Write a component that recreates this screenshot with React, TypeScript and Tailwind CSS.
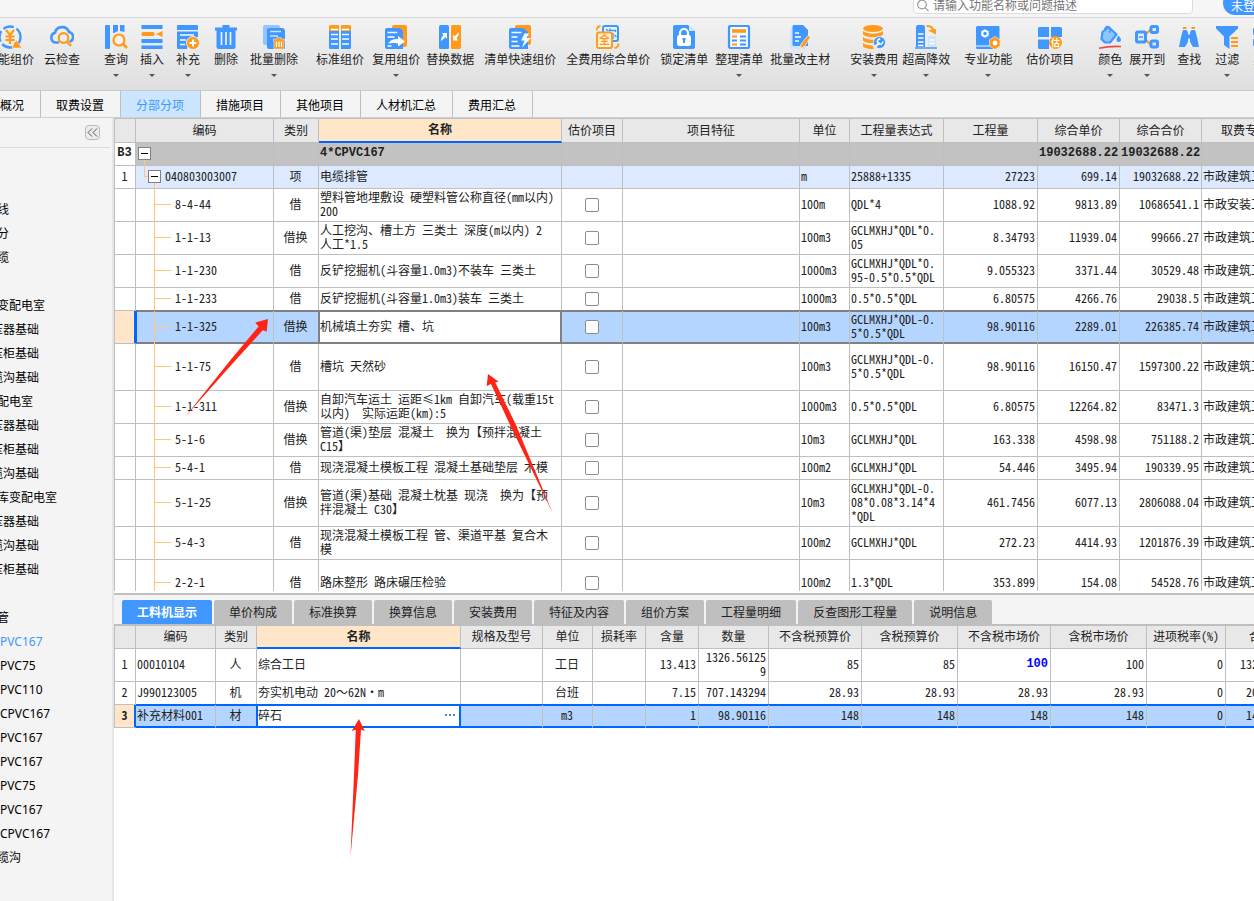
import { useState } from "react";
import type { ReactNode } from "react";
import clsx from "clsx";

const BLUE = "#3f97ff";
const ORANGE = "#ff9a1a";
const LIGHT = "#90c6ff";

/* ---------- toolbar icons ---------- */

const Icon = ({ children }: { children: ReactNode }) => (
  <svg viewBox="0 0 24 24" className="h-6 w-6 shrink-0" fill="none" aria-hidden="true">
    {children}
  </svg>
);

const icons: Record<string, ReactNode> = {
  smart: (
    <Icon>
      <circle cx="12" cy="12" r="10.5" stroke={BLUE} strokeWidth="2.4" strokeDasharray="11 3" />
      <path d="M8 5l4 5 4-5M12 10v9M7.500 11.500h9M7.500 15h9" stroke={ORANGE} strokeWidth="2.200" />
      <path d="M14 23l1.500-4L18.500 15l2.500 4L24 23z" fill={ORANGE} stroke="#eee" strokeWidth=".6" />
    </Icon>
  ),
  cloud: (
    <Icon>
      <path d="M8 19.500H6a5 5 0 0 1-1-9.800A7.300 7.300 0 0 1 19 9a5 5 0 0 1 1.500 9.300" stroke={BLUE} strokeWidth="2.600" strokeLinecap="round" transform="translate(0 -2)" />
      <circle cx="13.500" cy="13" r="4.800" stroke={ORANGE} strokeWidth="2.200" />
      <path d="M17 16.500l4 4.500" stroke={ORANGE} strokeWidth="2.600" />
    </Icon>
  ),
  search: (
    <Icon>
      <rect x="1" y="0" width="5" height="24" rx="1" fill={BLUE} />
      <path d="M9 0h5v6l-4 2H9zM16 0h4.500v7L16 6z" fill={BLUE} />
      <circle cx="15" cy="15" r="5.500" fill="#f2f2f2" stroke={ORANGE} strokeWidth="2.200" />
      <path d="M19 19l4 4" stroke={ORANGE} strokeWidth="2.600" />
    </Icon>
  ),
  insert: (
    <Icon>
      <path d="M1.500 0h21v4h-21zM1.500 14h21v4h-21zM1.500 20.500h21v3.500h-21z" fill={BLUE} />
      <rect x="1.500" y="7" width="13" height="4" rx="1.500" fill={ORANGE} />
      <path d="M22.500 6v6l-6.500-3z" fill={ORANGE} />
    </Icon>
  ),
  append: (
    <Icon>
      <path d="M2 0h19a1 1 0 0 1 1 1v4H1V1a1 1 0 0 1 1-1zM1 6.500h21V12l-9 3-2 9H2a1 1 0 0 1-1-1z" fill={BLUE} />
      <path d="M4 10h14M4 15h6M4 19.500h5" stroke="#fff" strokeWidth="1.600" />
      <circle cx="17" cy="18" r="6.500" fill={ORANGE} stroke="#eee" />
      <path d="M17 14.500v7M13.500 18h7" stroke="#fff" strokeWidth="2" />
    </Icon>
  ),
  remove: (
    <Icon>
      <path d="M1 2.500h7.500V0h7v2.500H23v3h-1.500V22a2 2 0 0 1-2 2h-15a2 2 0 0 1-2-2V5.500H1z" fill={BLUE} />
      <path d="M7.500 7v13M12 7v13M16.500 7v13" stroke="#eaf3ff" strokeWidth="1.700" />
    </Icon>
  ),
  batchRemove: (
    <Icon>
      <rect x="1" y="0" width="17" height="20" rx="2" fill={LIGHT} />
      <path d="M7 3h14l2 2v19H7a2 2 0 0 1-2-2V5a2 2 0 0 1 2-2z" fill={BLUE} />
      <path d="M8 6.500h11M8 11h8" stroke="#cfe5ff" strokeWidth="1.500" />
      <path d="M11.500 14h3.500v-1.500h4V14h3.500v2H22v8H12v-8h-.500z" fill={ORANGE} stroke="#e8e8e8" strokeWidth=".6" />
      <path d="M14.500 16.500V22M17 16.500V22M19.500 16.500V22" stroke="#fff" strokeWidth="1.200" />
    </Icon>
  ),
  standard: (
    <Icon>
      <path d="M1 6V1.500A1.500 1.500 0 0 1 2.500 0H10a1 1 0 0 1 1 1v5zM13 6V1a1 1 0 0 1 1-1h7.500A1.500 1.500 0 0 1 23 1.500V6z" fill={ORANGE} />
      <path d="M1 6h10v18H2.500A1.500 1.500 0 0 1 1 22.500zM13 6h10v16.500a1.500 1.500 0 0 1-1.500 1.500H13z" fill={BLUE} />
      <path d="M3 4.500h7M14 4.500h7M3 9.500h7M14 9.500h7M3 14h7M14 14h7M3 19h7M14 19h7" stroke="#fff" strokeWidth="1.500" />
    </Icon>
  ),
  reuse: (
    <Icon>
      <rect x="8" y="0" width="15" height="22" rx="2" fill={ORANGE} />
      <path d="M3 3h13l3 3v18H3a2 2 0 0 1-2-2V5a2 2 0 0 1 2-2z" fill={BLUE} />
      <path d="M3.500 7.500h10M3.500 12h7M3.500 21h4" stroke="#fff" strokeWidth="1.600" />
      <path d="M4 18.500c3-4 6-4.500 10-4.500v-3l7 5.500-7 5v-3c-4-.8-7-.5-10 0z" fill="#fff" />
    </Icon>
  ),
  replace: (
    <Icon>
      <rect x="1" y="0" width="10" height="24" rx="1.500" fill={BLUE} />
      <rect x="13" y="0" width="10" height="24" rx="1.500" fill={ORANGE} />
      <path d="M3 16c0-3 1-4.500 2.500-6L4 8h5v6l-1.500-2C6 13.500 5 14.500 3 16zM21 7c0 3-1 4.500-2.500 6l1.500 2.500h-5V9.500l1.500 2C18 10 19 9 21 7z" fill="#fff" />
    </Icon>
  ),
  fast: (
    <Icon>
      <rect x="7" y="0" width="16" height="20" rx="2" fill={ORANGE} />
      <path d="M3 3h12l5 4v17H3a2 2 0 0 1-2-2V5a2 2 0 0 1 2-2z" fill={BLUE} />
      <path d="M3.500 7.500h10M3.500 12h6M3.500 16.500h6M3.500 21h8" stroke="#fff" strokeWidth="1.500" />
      <path d="M16.500 8.500h4.500L18.500 13H23l-9 9.500 2.500-7H13z" fill="#fff" />
    </Icon>
  ),
  full: (
    <Icon>
      <rect x="7" y="1" width="15" height="15" rx="2" fill="#eaf3ff" stroke={BLUE} strokeWidth="2" />
      <path d="M10 4l2 2M14 3.500v1.500M12.500 5.500h7v1.500M17 8v6M18.500 10l2 2" stroke={BLUE} strokeWidth="1.400" />
      <rect x="1" y="7.500" width="15" height="15.500" rx="2" fill="#fff2e0" stroke={ORANGE} strokeWidth="2" />
      <text x="3" y="19" fontSize="11" fontWeight="700" fill={ORANGE}>全</text>
      <path d="M.500 5.500c0-2.500 1.500-4 4-4.500M22.500 18.500c0 2.500-1.500 4-4 4.500" stroke={ORANGE} strokeWidth="1.800" />
    </Icon>
  ),
  lock: (
    <Icon>
      <path d="M3 0h13l7 6v16a2 2 0 0 1-2 2H3a2 2 0 0 1-2-2V2a2 2 0 0 1 2-2z" fill={BLUE} />
      <path d="M17 0l6 6h-6z" fill="#cfe5ff" />
      <rect x="5" y="10" width="14" height="11" rx="2.500" fill="#fff" />
      <path d="M8 10.500V8a4 4 0 0 1 8 0v2.500" stroke="#fff" strokeWidth="2.200" />
      <path d="M12 13v5M10.500 14h3" stroke={BLUE} strokeWidth="2" />
    </Icon>
  ),
  arrange: (
    <Icon>
      <rect x="2" y="1" width="20" height="22" rx="1.500" fill="#f6f9ff" stroke={BLUE} strokeWidth="2.200" />
      <path d="M5 6h14" stroke={ORANGE} strokeWidth="3.600" />
      <path d="M5 11.500h5M5 19.500h5" stroke={ORANGE} strokeWidth="1.800" />
      <path d="M13 11.500h6M5 15.500h5M13 15.500h6M13 19.500h6" stroke={BLUE} strokeWidth="1.800" />
    </Icon>
  ),
  batchEdit: (
    <Icon>
      <path d="M3 3h3v18h12v1a2 2 0 0 1-2 2H4a2 2 0 0 1-2-2V4z" fill="#cfe5ff" />
      <path d="M6 0h9l5 5v16H6a1.500 1.500 0 0 1-1.500-1.500v-18A1.500 1.500 0 0 1 6 0z" fill={BLUE} />
      <path d="M7 8h4M7 12h6M7 16h4" stroke="#fff" strokeWidth="1.500" />
      <path d="M20 10.500l2.500 1.500-6 9.500-4 2 .500-4.500z" fill={ORANGE} stroke="#eee" strokeWidth=".8" />
    </Icon>
  ),
  install: (
    <Icon>
      <ellipse cx="11" cy="3.500" rx="10" ry="3.500" fill={ORANGE} />
      <path d="M1 6c4 3.500 16 3.500 20 0v3.500C17 13 5 13 1 9.500zM1 12c3 2.600 8 3 12 2.400L11 18c-4 .2-8-.5-10-2.500zM1 18c2.500 1.800 6 2.500 9.500 2.500L12 24C8 24 3 23.500 1 21.500z" fill={ORANGE} />
      <circle cx="17.500" cy="17.500" r="6" fill={BLUE} stroke="#f0f0f0" strokeWidth=".8" />
      <path d="M13.500 21.500l4-4" stroke="#fff" strokeWidth="2.200" />
      <path d="M20.800 16.500a2.700 2.700 0 1 1-2.600-2.600" stroke="#fff" strokeWidth="1.600" />
    </Icon>
  ),
  tower: (
    <Icon>
      <path d="M2 2a2 2 0 0 1 2-2h5a2 2 0 0 1 2 2v20H2z" fill={BLUE} />
      <path d="M4 9h5.500M4 13h5.500M4 17h5.500M4 20.500h5.500" stroke="#fff" strokeWidth="1.500" />
      <rect x="14" y="11" width="8" height="11" rx="1" fill="#cfe5ff" />
      <path d="M15.500 15h5M15.500 18.500h5" stroke="#fff" strokeWidth="1.300" />
      <path d="M1 23h22" stroke={BLUE} strokeWidth="1.500" />
      <path d="M12.500 1c4 0 6.500 1.500 6.500 5" stroke={ORANGE} strokeWidth="2.200" />
      <path d="M14 5.500l8-1.500v5.500z" fill={ORANGE} />
    </Icon>
  ),
  pro: (
    <Icon>
      <path d="M1.500 1h21a1.500 1.500 0 0 1 1 1.500V14L17 24H1.500A1.500 1.500 0 0 1 0 22.500v-20A1.500 1.500 0 0 1 1.500 1z" fill={BLUE} />
      <path d="M9 4.300l3.700 2v4.400L9 12.800l-3.700-2.100V6.300z" fill="#fff" />
      <circle cx="9" cy="8.500" r="1.700" fill={BLUE} />
      <path d="M0 21h15" stroke="#d9eaff" strokeWidth="1.200" />
      <path d="M19 11.500l5 3.300v6.400l-5 3.300-5.500-3.300v-6.400z" fill={ORANGE} stroke="#eee" strokeWidth=".6" />
      <circle cx="19" cy="18" r="2.400" fill="#fff" />
    </Icon>
  ),
  estimate: (
    <Icon>
      <path d="M0 3.500A1.500 1.500 0 0 1 1.500 2H11v10H0zM13 2h9.500A1.500 1.500 0 0 1 24 3.500V12H13zM0 14.500h11V24H1.500A1.500 1.500 0 0 1 0 22.500z" fill={BLUE} />
      <circle cx="17.500" cy="17.500" r="6.500" fill={ORANGE} />
      <text x="13" y="21" fontSize="9" fontWeight="700" fill="#fff">估</text>
    </Icon>
  ),
  color: (
    <Icon>
      <path d="M10.500 2l8 7.500-6.500 8H7L3.500 14 4.500 7z" fill={LIGHT} stroke={BLUE} strokeWidth="2.200" strokeLinejoin="round" />
      <path d="M6.500 4.500C8 .500 11 .500 12 4v4" stroke={BLUE} strokeWidth="1.500" />
      <path d="M20.500 10.500c1.500 2 2.500 3.200 2.500 4.300a2.300 2.300 0 0 1-4.600 0c0-1.100 1-2.300 2.100-4.300z" fill={BLUE} />
      <path d="M1 23.200c7-1.500 14-2 22-1.700" stroke="#f0464b" strokeWidth="1.600" />
    </Icon>
  ),
  expand: (
    <Icon>
      <path d="M10 10l6-6M10 14l6 6" stroke={ORANGE} strokeWidth="1.800" />
      <rect x="1.500" y="7" width="9" height="10" rx="1.500" fill="#dcebff" stroke={BLUE} strokeWidth="3" />
      <path d="M4 12h4" stroke={BLUE} strokeWidth="1.500" />
      <rect x="16" y="1.500" width="6.500" height="6" rx="1.500" fill="#dcebff" stroke={BLUE} strokeWidth="3" />
      <rect x="16" y="16" width="6.500" height="6" rx="1.500" fill="#dcebff" stroke={BLUE} strokeWidth="3" />
    </Icon>
  ),
  find: (
    <Icon>
      <path d="M6 2h3.500v2H6zM14.500 2H18v2h-3.500z" fill={ORANGE} />
      <path d="M6 5h3.500l1.500 2.500V17l-3 5H2l2-10zM18 5h-3.500L13 7.500V17l3 5h6l-2-10z" fill={BLUE} />
      <path d="M10 9.500h4v4h-4z" fill={BLUE} />
    </Icon>
  ),
  filter: (
    <Icon>
      <path d="M1 1h22v2.500l-8.500 8V24L9 20v-8.500L1 3.500z" fill={BLUE} />
      <path d="M16 13h7M16 17h7M16 21h7" stroke={ORANGE} strokeWidth="2" />
    </Icon>
  ),
  other: (
    <Icon>
      <rect x="0" y="2" width="10" height="9" rx="3" fill={BLUE} />
      <rect x="13" y="2" width="10" height="9" rx="3" fill={ORANGE} />
      <rect x="0" y="13" width="10" height="9" rx="3" fill={BLUE} />
      <rect x="13" y="13" width="10" height="9" rx="3" fill={BLUE} />
    </Icon>
  ),
};

type Tool = { label: string; icon: string; menu?: boolean };

const toolGroups: { className: string; tools: Tool[] }[] = [
  {
    className: "-ml-3.5 gap-2.5",
    tools: [
      { label: "智能组价", icon: "smart" },
      { label: "云检查", icon: "cloud" },
    ],
  },
  {
    className: "ml-6 gap-3",
    tools: [
      { label: "查询", icon: "search", menu: true },
      { label: "插入", icon: "insert", menu: true },
      { label: "补充", icon: "append", menu: true },
    ],
  },
  {
    className: "ml-3.5 gap-3",
    tools: [
      { label: "删除", icon: "remove" },
      { label: "批量删除", icon: "batchRemove", menu: true },
    ],
  },
  {
    className: "ml-[18px] gap-2",
    tools: [
      { label: "标准组价", icon: "standard" },
      { label: "复用组价", icon: "reuse", menu: true },
    ],
  },
  {
    className: "ml-1.5 gap-2.5",
    tools: [
      { label: "替换数据", icon: "replace" },
      { label: "清单快速组价", icon: "fast" },
      { label: "全费用综合单价", icon: "full" },
    ],
  },
  {
    className: "ml-2.5 gap-[7px]",
    tools: [
      { label: "锁定清单", icon: "lock" },
      { label: "整理清单", icon: "arrange", menu: true },
      { label: "批量改主材", icon: "batchEdit" },
    ],
  },
  {
    className: "ml-5 gap-1",
    tools: [
      { label: "安装费用", icon: "install", menu: true },
      { label: "超高降效", icon: "tower", menu: true },
    ],
  },
  {
    className: "ml-3.5 gap-3.5",
    tools: [
      { label: "专业功能", icon: "pro", menu: true },
      { label: "估价项目", icon: "estimate" },
    ],
  },
  {
    className: "ml-6 gap-[7px]",
    tools: [
      { label: "颜色", icon: "color", menu: true },
      { label: "展开到", icon: "expand", menu: true },
    ],
  },
  {
    className: "ml-3 gap-3.5",
    tools: [
      { label: "查找", icon: "find" },
      { label: "过滤", icon: "filter", menu: true },
      { label: "其他", icon: "other" },
    ],
  },
];

function Header() {
  return (
    <header className="flex h-[18px] shrink-0 items-end justify-end overflow-hidden border-b border-[#d8d8d8] bg-[#f6f6f6]">
      <div className="mb-[3px] flex h-6 w-[280px] shrink-0 items-end rounded border border-[#dcdcdc] bg-white pl-0.5">
        <svg viewBox="0 0 14 14" className="h-3.5 w-3.5" fill="none" stroke="#999" strokeWidth="1.200" aria-hidden="true">
          <circle cx="6" cy="5.500" r="4.300" />
          <path d="M9.200 8.700l3.300 3.500" />
        </svg>
        <input
          aria-label="搜索"
          placeholder="请输入功能名称或问题描述"
          className="ml-[3px] h-3.5 w-60 text-xs leading-[14px] outline-none placeholder:text-[#777]"
        />
      </div>
      <button className="-mr-8 mb-0.5 ml-[30px] flex h-6 shrink-0 items-end rounded-full bg-[#3f97ff] pl-2 pr-[19px] text-xs leading-4 text-white">
        未登录
      </button>
    </header>
  );
}

function Toolbar() {
  return (
    <div className="flex h-[73px] shrink-0 overflow-hidden border-b border-[#c8c8c8] bg-linear-to-b from-[#f2f2f2] to-[#dfdfdf]">
      {toolGroups.map((group, i) => (
        <div key={i} className={clsx("flex shrink-0", group.className)}>
          {group.tools.map((t) => (
            <button key={t.label} className="flex flex-col items-center pt-[7px] text-xs leading-4 text-[#222]">
              {icons[t.icon]}
              <span className="mt-[3px] whitespace-nowrap">{t.label}</span>
              {t.menu && <span className="mt-1.5 border-x-[3px] border-t-[3px] border-x-transparent border-t-[#555]" />}
            </button>
          ))}
        </div>
      ))}
    </div>
  );
}

const mainTabs = ["工程概况", "取费设置", "分部分项", "措施项目", "其他项目", "人材机汇总", "费用汇总"];

function MainTabs() {
  const [current, setCurrent] = useState("分部分项");
  return (
    <nav className="flex h-[27px] shrink-0 overflow-hidden border-b border-[#d0d0d0] bg-[#f4f4f4]">
      <div className="-ml-[39px] flex">
        {mainTabs.map((t) => (
          <button
            key={t}
            onClick={() => setCurrent(t)}
            className={clsx(
              "shrink-0 whitespace-nowrap border-r border-[#bfbfbf] pl-[15px] pr-4 pt-[3px] text-xs",
              t === current ? "bg-[#cce6ff] text-[#3f97ff]" : "text-black"
            )}
          >
            {t}
          </button>
        ))}
      </div>
    </nav>
  );
}

/* ---------- sidebar ---------- */

const treeItems: { text: string; deep?: boolean }[] = [
  { text: "线" },
  { text: "分" },
  { text: "缆" },
  { text: "" },
  { text: "变配电室" },
  { text: "压器基础", deep: true },
  { text: "压柜基础", deep: true },
  { text: "缆沟基础", deep: true },
  { text: "配电室" },
  { text: "压器基础", deep: true },
  { text: "压柜基础", deep: true },
  { text: "缆沟基础", deep: true },
  { text: "库变配电室" },
  { text: "压器基础", deep: true },
  { text: "缆沟基础", deep: true },
  { text: "压柜基础", deep: true },
  { text: "" },
  { text: "管" },
  { text: "PVC167" },
  { text: "PVC75" },
  { text: "PVC110" },
  { text: "CPVC167" },
  { text: "PVC167" },
  { text: "PVC167" },
  { text: "PVC75" },
  { text: "PVC167" },
  { text: "CPVC167" },
  { text: "缆沟" },
];

function Sidebar() {
  const [picked, setPicked] = useState(18);
  return (
    <aside className="w-[114px] shrink-0 overflow-hidden border-r-2 border-[#e6e6e6] bg-[#f4f4f4]">
      <div className="mr-0.5 flex h-[30px] items-center justify-end border-b border-[#dcdcdc] pr-[10px]">
        <button
          aria-label="收起"
          className="flex h-[15px] w-[15px] items-center justify-center rounded-sm border border-[#bbb] bg-[#ececec]"
        >
          <svg viewBox="0 0 11 9" className="h-[9px] w-[11px]" fill="none" stroke="#555" aria-hidden="true">
            <path d="M5 .500l-4 4 4 4M10 .500l-4 4 4 4" />
          </svg>
        </button>
      </div>
      <ul className="pt-[50px]">
        {treeItems.map((item, i) => (
          <li key={i} className={clsx("h-6", item.deep ? "-ml-[9px]" : /^[CP]/.test(item.text) ? "ml-0" : "-ml-[3px]")}>
            {item.text && (
              <button
                onClick={() => setPicked(i)}
                className={clsx(
                  "block whitespace-nowrap font-['Noto_Sans','Noto_Sans_CJK_SC',sans-serif] text-xs leading-6",
                  i === picked ? "text-[#3f97ff]" : "text-black"
                )}
              >
                {item.text}
              </button>
            )}
          </li>
        ))}
      </ul>
    </aside>
  );
}

/* ---------- grids ---------- */

const th = "whitespace-nowrap border-b border-r border-[#bfbfbf] bg-[#e8e8e8] px-0 pb-0.5 pt-0 text-center font-normal";
const thActive = "border-b-2 border-r border-b-[#0066ff] border-r-[#bfbfbf] bg-[#ffe6c8] px-0 pb-0.5 pt-0 text-center font-bold";
const td = "relative whitespace-pre border-b border-r border-[#bfbfbf] pb-0.5 pl-px pr-0.5 pt-0";
const tdCheck = "relative border-b border-r border-[#bfbfbf] p-0";

type Item = {
  code: string;
  kind: string;
  name: string;
  unit: string;
  expr: string;
  qty: string;
  price: string;
  total: string;
  spec: string;
  height: string;
};

const h1 = "h-[23px]";
const h2 = "h-[33px]";
const h3 = "h-[47px]";

const items: Item[] = [
  { code: "8-4-44", kind: "借", name: "塑料管地埋敷设 硬塑料管公称直径(mm以内)\n200", unit: "100m", expr: "QDL*4", qty: "1088.92", price: "9813.89", total: "10686541.1", spec: "市政安装工程", height: h2 },
  { code: "1-1-13", kind: "借换", name: "人工挖沟、槽土方 三类土 深度(m以内) 2\n人工*1.5", unit: "100m3", expr: "GCLMXHJ*QDL*0.\n05", qty: "8.34793", price: "11939.04", total: "99666.27", spec: "市政建筑工程", height: h2 },
  { code: "1-1-230", kind: "借", name: "反铲挖掘机(斗容量1.0m3)不装车 三类土", unit: "1000m3", expr: "GCLMXHJ*QDL*0.\n95-0.5*0.5*QDL", qty: "9.055323", price: "3371.44", total: "30529.48", spec: "市政建筑工程", height: h2 },
  { code: "1-1-233", kind: "借", name: "反铲挖掘机(斗容量1.0m3)装车 三类土", unit: "1000m3", expr: "0.5*0.5*QDL", qty: "6.80575", price: "4266.76", total: "29038.5", spec: "市政建筑工程", height: h1 },
  { code: "1-1-325", kind: "借换", name: "机械填土夯实 槽、坑", unit: "100m3", expr: "GCLMXHJ*QDL-0.\n5*0.5*QDL", qty: "98.90116", price: "2289.01", total: "226385.74", spec: "市政建筑工程", height: h2 },
  { code: "1-1-75", kind: "借", name: "槽坑 天然砂", unit: "100m3", expr: "GCLMXHJ*QDL-0.\n5*0.5*QDL", qty: "98.90116", price: "16150.47", total: "1597300.22", spec: "市政建筑工程", height: h3 },
  { code: "1-1-311", kind: "借换", name: "自卸汽车运土 运距≤1km 自卸汽车(载重15t\n以内)  实际运距(km):5", unit: "1000m3", expr: "0.5*0.5*QDL", qty: "6.80575", price: "12264.82", total: "83471.3", spec: "市政建筑工程", height: h2 },
  { code: "5-1-6", kind: "借换", name: "管道(渠)垫层 混凝土  换为【预拌混凝土\nC15】", unit: "10m3", expr: "GCLMXHJ*QDL", qty: "163.338", price: "4598.98", total: "751188.2", spec: "市政建筑工程", height: h2 },
  { code: "5-4-1", kind: "借", name: "现浇混凝土模板工程 混凝土基础垫层 木模", unit: "100m2", expr: "GCLMXHJ*QDL", qty: "54.446", price: "3495.94", total: "190339.95", spec: "市政建筑工程", height: h1 },
  { code: "5-1-25", kind: "借换", name: "管道(渠)基础 混凝土枕基 现浇  换为【预\n拌混凝土 C30】", unit: "10m3", expr: "GCLMXHJ*QDL-0.\n08*0.08*3.14*4\n*QDL", qty: "461.7456", price: "6077.13", total: "2806088.04", spec: "市政建筑工程", height: h3 },
  { code: "5-4-3", kind: "借", name: "现浇混凝土模板工程 管、渠道平基 复合木\n模", unit: "100m2", expr: "GCLMXHJ*QDL", qty: "272.23", price: "4414.93", total: "1201876.39", spec: "市政建筑工程", height: h2 },
  { code: "2-2-1", kind: "借", name: "路床整形 路床碾压检验", unit: "100m2", expr: "1.3*QDL", qty: "353.899", price: "154.08", total: "54528.76", spec: "市政建筑工程", height: h3 },
];

const Toggle = ({ className }: { className?: string }) => (
  <button
    aria-label="折叠"
    className={clsx("relative z-10 flex h-[13px] w-[13px] items-center justify-center border border-[#808080] bg-white", className)}
  >
    <span className="h-px w-[7px] bg-black" />
  </button>
);

const selectedTd = "border-b-[#808080] bg-[#b3d5ff] shadow-[0_-1px_#808080,inset_0_1px_#808080,inset_0_-1px_#808080]";

function ItemTable() {
  const [selected, setSelected] = useState("1-1-325");
  return (
    <table className="w-full min-w-[1175px] table-fixed border-separate border-spacing-0 border-l border-t border-[#bfbfbf] leading-[14px]">
      <colgroup>
        <col className="w-[21px]" />
        <col className="w-[138px]" />
        <col className="w-[45px]" />
        <col className="w-[243px]" />
        <col className="w-[61px]" />
        <col />
        <col className="w-[50px]" />
        <col className="w-[94px]" />
        <col className="w-[94px]" />
        <col className="w-[82px]" />
        <col className="w-[82px]" />
        <col className="w-[87px]" />
      </colgroup>
      <thead>
        <tr className="h-6">
          <th className={th} aria-label="序号" />
          <th className={th}>编码</th>
          <th className={th}>类别</th>
          <th className={thActive}>名称</th>
          <th className={th}>估价项目</th>
          <th className={th}>项目特征</th>
          <th className={th}>单位</th>
          <th className={th}>工程量表达式</th>
          <th className={th}>工程量</th>
          <th className={th}>综合单价</th>
          <th className={th}>综合合价</th>
          <th className={th}>取费专业</th>
        </tr>
      </thead>
      <tbody>
        <tr className="h-[23px] bg-[#c2c2c2] font-['Liberation_Mono',monospace] font-bold">
          <td className={clsx(td, "bg-white text-center")}>B3</td>
          <td className={td}>
            <Toggle className="ml-px" />
            <span className="absolute -bottom-px left-2 h-1.5 w-px bg-[#ffc67a]" />
          </td>
          <td className={td} />
          <td className={td}>4*CPVC167</td>
          <td className={td} />
          <td className={td} />
          <td className={td} />
          <td className={td} />
          <td className={td} />
          <td className={clsx(td, "text-right")}>19032688.22</td>
          <td className={clsx(td, "text-right")}>19032688.22</td>
          <td className={td} />
        </tr>
        <tr className="h-[23px] bg-[#dce9ff]">
          <td className={clsx(td, "bg-white text-center")}>1</td>
          <td className={td}>
            <span className="absolute left-2 top-0 h-[11px] w-1 border-b border-l border-[#ffc67a]" />
            <span className="absolute -bottom-px left-[18px] h-1.5 w-px bg-[#ffc67a]" />
            <span className="flex items-center gap-1 pl-[11px]">
              <Toggle className="shrink-0" />
              040803003007
            </span>
          </td>
          <td className={clsx(td, "text-center")}>项</td>
          <td className={td}>电缆排管</td>
          <td className={td} />
          <td className={td} />
          <td className={td}>m</td>
          <td className={td}>25888+1335</td>
          <td className={clsx(td, "text-right")}>27223</td>
          <td className={clsx(td, "text-right")}>699.14</td>
          <td className={clsx(td, "text-right")}>19032688.22</td>
          <td className={td}>市政建筑工程</td>
        </tr>
        {items.map((r) => {
          const on = r.code === selected;
          const cell = clsx(td, on && selectedTd);
          return (
            <tr key={r.code} className={r.height} onClick={() => setSelected(r.code)}>
              <td className={clsx(td, on && "border-r-[#0066ff] bg-[#ffe6c8] shadow-[inset_-1px_0_#0066ff]")} />
              <td
                className={clsx(
                  td,
                  on &&
                    "border-b-[#808080] bg-[#b3d5ff] shadow-[inset_1px_0_#0066ff,0_-1px_#808080,inset_0_1px_#808080,inset_0_-1px_#808080]"
                )}
              >
                <span className="absolute -bottom-px left-[18px] top-0 w-px bg-[#ffc67a]" />
                <span className="absolute left-[18px] top-1/2 h-px w-[17px] -translate-y-px bg-[#ffc67a]" />
                <span className="pl-[38px]">{r.code}</span>
              </td>
              <td className={clsx(cell, "text-center")}>{r.kind}</td>
              <td
                className={clsx(
                  td,
                  on && "border-b-[#808080] border-r-[#808080] shadow-[0_-1px_#808080,-1px_0_#808080,inset_1px_0_#808080,inset_0_1px_#808080,inset_0_-1px_#808080,inset_-1px_0_#808080]"
                )}
              >
                {r.name}
              </td>
              <td className={clsx(tdCheck, on && selectedTd)}>
                <input
                  type="checkbox"
                  aria-label={"估价项目 " + r.code}
                  className="mx-auto block h-3.5 w-3.5 appearance-none rounded-xs border border-[#8c8c8c] bg-white checked:bg-[#3f97ff]"
                />
              </td>
              <td className={cell} />
              <td className={cell}>{r.unit}</td>
              <td className={cell}>{r.expr}</td>
              <td className={clsx(cell, "text-right")}>{r.qty}</td>
              <td className={clsx(cell, "text-right")}>{r.price}</td>
              <td className={clsx(cell, "text-right")}>{r.total}</td>
              <td className={cell}>{r.spec}</td>
            </tr>
          );
        })}
      </tbody>
    </table>
  );
}

const detailTabs = ["工料机显示", "单价构成", "标准换算", "换算信息", "安装费用", "特征及内容", "组价方案", "工程量明细", "反查图形工程量", "说明信息"];

const materials = [
  { code: "00010104", kind: "人", name: "综合工日", unit: "工日", content: "13.413", qty: "1326.56125\n9", prices: ["85", "85", "100", "100"], sum: "132656.13", height: h2 },
  { code: "J990123005", kind: "机", name: "夯实机电动 20～62N·m", unit: "台班", content: "7.15", qty: "707.143294", prices: ["28.93", "28.93", "28.93", "28.93"], sum: "20457.66", height: h1 },
  { code: "补充材料001", kind: "材", name: "碎石", unit: "m3", content: "1", qty: "98.90116", prices: ["148", "148", "148", "148"], sum: "14637.37", height: h1 },
];

function MaterialTable() {
  const [selected, setSelected] = useState(2);
  return (
    <table className="w-full min-w-[1183px] table-fixed border-separate border-spacing-0 border-l border-[#bfbfbf] leading-[14px]">
      <colgroup>
        <col className="w-[21px]" />
        <col className="w-[80px]" />
        <col className="w-[41px]" />
        <col className="w-[204px]" />
        <col className="w-[82px]" />
        <col className="w-[50px]" />
        <col className="w-[53px]" />
        <col className="w-[53px]" />
        <col className="w-[70px]" />
        <col className="w-[93px]" />
        <col className="w-[96px]" />
        <col className="w-[93px]" />
        <col className="w-[96px]" />
        <col className="w-[79px]" />
        <col />
      </colgroup>
      <thead>
        <tr className="h-[23px]">
          <th className={th} aria-label="序号" />
          <th className={th}>编码</th>
          <th className={th}>类别</th>
          <th className={thActive}>名称</th>
          <th className={th}>规格及型号</th>
          <th className={th}>单位</th>
          <th className={th}>损耗率</th>
          <th className={th}>含量</th>
          <th className={th}>数量</th>
          <th className={th}>不含税预算价</th>
          <th className={th}>含税预算价</th>
          <th className={th}>不含税市场价</th>
          <th className={th}>含税市场价</th>
          <th className={th}>进项税率(%)</th>
          <th className={th}>合价</th>
        </tr>
      </thead>
      <tbody>
        {materials.map((m, i) => {
          const on = i === selected;
          const cell = clsx(
            td,
            on && "border-b-[#0066ff] bg-[#b3d5ff] shadow-[0_-1px_#0066ff,inset_0_1px_#0066ff,inset_0_-1px_#0066ff]"
          );
          return (
            <tr key={m.code} className={m.height} onClick={() => setSelected(i)}>
              <td
                className={clsx(
                  td,
                  "text-center",
                  on && "border-r-[#0066ff] bg-[#ffe6c8] font-bold shadow-[inset_-1px_0_#0066ff]"
                )}
              >
                {i + 1}
              </td>
              <td className={cell}>{m.code}</td>
              <td className={clsx(cell, "text-center", on && "border-r-[#0066ff]")}>{m.kind}</td>
              <td
                className={clsx(
                  td,
                  on && "border-b-[#0066ff] border-r-[#0066ff] shadow-[0_-1px_#0066ff,inset_0_1px_#0066ff,inset_0_-1px_#0066ff,inset_-1px_0_#0066ff,inset_1px_0_#0066ff]"
                )}
              >
                <span className="flex items-center justify-between">
                  {m.name}
                  {on && (
                    <button aria-label="更多" className="mr-[3px] flex gap-0.5">
                      <i className="h-0.5 w-0.5 bg-[#3f8fd0]" />
                      <i className="h-0.5 w-0.5 bg-[#3f8fd0]" />
                      <i className="h-0.5 w-0.5 bg-[#3f8fd0]" />
                    </button>
                  )}
                </span>
              </td>
              <td className={cell} />
              <td className={clsx(cell, "text-center")}>{m.unit}</td>
              <td className={cell} />
              <td className={clsx(cell, "text-right")}>{m.content}</td>
              <td className={clsx(cell, "text-right")}>{m.qty}</td>
              {m.prices.map((p, k) => (
                <td
                  key={k}
                  className={clsx(
                    cell,
                    "text-right",
                    i === 0 && k === 2 && "font-['Liberation_Mono',monospace] font-bold text-[#0000ff]"
                  )}
                >
                  {p}
                </td>
              ))}
              <td className={clsx(cell, "text-right")}>0</td>
              <td className={clsx(cell, "text-right")}>{m.sum}</td>
            </tr>
          );
        })}
      </tbody>
    </table>
  );
}

function DetailPanel() {
  const [current, setCurrent] = useState(detailTabs[0]);
  return (
    <section className="h-[308px] shrink-0 overflow-hidden border-t-2 border-[#bfbfbf]">
      <div className="flex gap-0.5 border-b-2 border-[#bfbfbf] bg-[#f4f4f4] pl-2 pt-[5px]">
        {detailTabs.map((t) => (
          <button
            key={t}
            onClick={() => setCurrent(t)}
            className={clsx(
              "h-6 shrink-0 rounded-t-xs px-[15px] text-xs",
              t === current ? "bg-[#3f97ff] font-bold text-white" : "bg-[#bfbfbf] text-[#222]"
            )}
          >
            {t}
          </button>
        ))}
      </div>
      <MaterialTable />
    </section>
  );
}

/* red pointers drawn over the sheet */
function Pointers() {
  return (
    <svg className="pointer-events-none absolute left-0 top-0 z-20 h-[901px] w-[1254px]" fill="#ff2415" aria-hidden="true">
      <path d="M268 319l-1.300 12.500-4-1.200L233 363l-48 54 45.500-57L258.500 326.500l-3.200-4z" />
      <path d="M488 374l10.700 7.700-3.400.8L516 425l36.700 88L511 427l-20-43-4.300 2z" />
      <path d="M359 719l5.700 12-3.700-1.200-3 45-7.500 82 3.500-82 1.800-45-4.100 1.200z" />
    </svg>
  );
}

export default function App() {
  return (
    <div className="relative flex h-screen flex-col overflow-hidden bg-white font-['Open_Sans','Noto_Sans_CJK_SC',sans-serif] text-xs text-[#222]">
      <Header />
      <Toolbar />
      <MainTabs />
      <div className="flex min-h-0 flex-1">
        <Sidebar />
        <main className="flex min-w-0 flex-1 flex-col font-['Noto_Sans_Mono_CJK_SC','Noto_Sans_CJK_SC',monospace]">
          <div className="mb-0.5 min-h-0 flex-1 overflow-hidden">
            <ItemTable />
          </div>
          <DetailPanel />
        </main>
      </div>
      <Pointers />
    </div>
  );
}
